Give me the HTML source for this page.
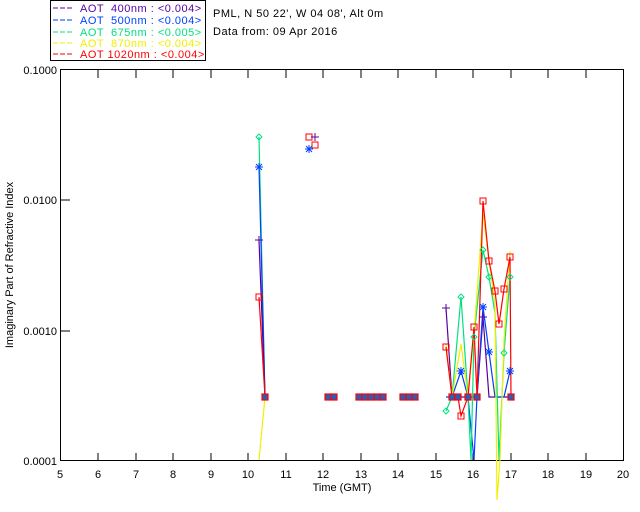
<!DOCTYPE html>
<html><head><style>
body{margin:0;background:#fff;width:640px;height:512px;overflow:hidden}
svg{display:block}
text{font-family:"Liberation Sans",sans-serif;font-size:11px}
</style></head><body>
<svg width="640" height="512" viewBox="0 0 640 512">
<rect x="50.5" y="0.5" width="155" height="60" fill="none" stroke="#000"/>
<g font-size="11" letter-spacing="0.5">
<line x1="53" y1="8" x2="74" y2="8" stroke="#5a00a0" stroke-dasharray="5,2"/><text x="80" y="12" fill="#5a00a0" xml:space="preserve">AOT  400nm : &lt;0.004&gt;</text>
<line x1="53" y1="20" x2="74" y2="20" stroke="#0040ff" stroke-dasharray="5,2"/><text x="80" y="24" fill="#0040ff" xml:space="preserve">AOT  500nm : &lt;0.004&gt;</text>
<line x1="53" y1="32" x2="74" y2="32" stroke="#00e080" stroke-dasharray="5,2"/><text x="80" y="36" fill="#00e080" xml:space="preserve">AOT  675nm : &lt;0.005&gt;</text>
<line x1="53" y1="43" x2="74" y2="43" stroke="#f0f000" stroke-dasharray="5,2"/><text x="80" y="47" fill="#f0f000" xml:space="preserve">AOT  870nm : &lt;0.004&gt;</text>
<line x1="53" y1="54" x2="74" y2="54" stroke="#ff0000" stroke-dasharray="5,2"/><text x="80" y="58" fill="#ff0000" xml:space="preserve">AOT 1020nm : &lt;0.004&gt;</text>
</g>
<g letter-spacing="0.5">
<text x="213" y="17">PML, N 50 22', W 04 08', Alt 0m</text>
<text x="213" y="35">Data from: 09 Apr 2016</text>
</g>
<rect x="60.5" y="69.5" width="563" height="391" fill="none" stroke="#000"/>
<g stroke="#000">
<path d="M98 70v8M136 70v8M173 70v8M211 70v8M248 70v8M286 70v8M323 70v8M361 70v8M398 70v8M436 70v8M473 70v8M511 70v8M548 70v8M586 70v8"/>
<path d="M98 461v-8M136 461v-8M173 461v-8M211 461v-8M248 461v-8M286 461v-8M323 461v-8M361 461v-8M398 461v-8M436 461v-8M473 461v-8M511 461v-8M548 461v-8M586 461v-8"/>
<path d="M60 200h10M60 331h10"/>
</g>
<g text-anchor="end" font-size="11"><text x="57" y="74">0.1000</text><text x="57" y="204">0.0100</text><text x="57" y="335">0.0010</text><text x="57" y="465">0.0001</text></g>
<g text-anchor="middle" font-size="11">
<text x="60" y="478">5</text><text x="98" y="478">6</text><text x="136" y="478">7</text><text x="173" y="478">8</text><text x="211" y="478">9</text><text x="248" y="478">10</text><text x="286" y="478">11</text><text x="323" y="478">12</text><text x="361" y="478">13</text><text x="398" y="478">14</text><text x="436" y="478">15</text><text x="473" y="478">16</text><text x="511" y="478">17</text><text x="548" y="478">18</text><text x="586" y="478">19</text><text x="623" y="478">20</text>
<text x="342" y="491">Time (GMT)</text>
<text transform="translate(13,265) rotate(-90)">Imaginary Part of Refractive Index</text>
</g>
<g fill="none" stroke-width="1.2">
<polyline stroke="#f0f000" points="259,460 265,397"/>
<polyline stroke="#00e080" points="259,137 265,397"/>
<polyline stroke="#0040ff" points="259,167 265,397"/>
<polyline stroke="#5a00a0" points="259,240 265,397"/>
<polyline stroke="#ff0000" points="259,297 265,397"/>
<polyline stroke="#5a00a0" points="446,308 452,397 458,397 468,397 474,397 477,397 483,317 489,397 495,397 499,397 504,397 510,397"/>
<polyline stroke="#0040ff" points="446,397 452,397 461,371 468,397 474,460 477,397 483,307 489,352 495,397 499,397 504,397 510,371"/>
<polyline stroke="#00e080" points="446,411 452,397 461,297 468,397 471,460 474,337 483,250 489,277 495,313 499,460 504,353 510,277"/>
<polyline stroke="#f0f000" points="446,344 452,397 461,344 468,397 474,333 483,213 489,260 495,305 497,500 500,460 504,340 510,251"/>
<polyline stroke="#ff0000" points="446,347 452,397 458,397 461,416 468,397 474,327 477,397 483,201 489,261 495,291 499,324 504,289 510,257 511,397"/>
</g>
<g fill="none" stroke-width="1">
<path stroke="#00e080" d="M259 134l3 3-3 3-3-3z"/>
<path stroke="#0040ff" d="M255 167h8M259 163v8M256 164l6 6M262 164l-6 6"/>
<path stroke="#5a00a0" d="M255 240h8M259 236v8"/>
<rect stroke="#ff0000" x="256" y="294" width="6" height="6"/>
<rect stroke="#ff0000" x="306" y="134" width="6" height="6"/>
<rect stroke="#ff0000" x="312" y="142" width="6" height="6"/>
<path stroke="#0040ff" d="M305 149h8M309 145v8M306 146l6 6M312 146l-6 6"/>
<path stroke="#5a00a0" d="M311 137h8M315 133v8"/>
<path stroke="#0040ff" d="M479 307h8M483 303v8M480 304l6 6M486 304l-6 6M457 371h8M461 367v8M458 368l6 6M464 368l-6 6M485 352h8M489 348v8M486 349l6 6M492 349l-6 6M506 371h8M510 367v8M507 368l6 6M513 368l-6 6"/>
<path stroke="#5a00a0" d="M442 308h8M446 304v8M479 317h8M483 313v8"/>
<path stroke="#00e080" d="M446 408l3 3-3 3-3-3zM461 294l3 3-3 3-3-3zM474 334l3 3-3 3-3-3zM483 247l3 3-3 3-3-3zM489 274l3 3-3 3-3-3zM504 350l3 3-3 3-3-3zM510 274l3 3-3 3-3-3z"/>
<g stroke="#ff0000">
<rect x="443" y="344" width="6" height="6"/><rect x="458" y="413" width="6" height="6"/><rect x="471" y="324" width="6" height="6"/><rect x="480" y="198" width="6" height="6"/><rect x="486" y="258" width="6" height="6"/><rect x="492" y="288" width="6" height="6"/><rect x="496" y="321" width="6" height="6"/><rect x="501" y="286" width="6" height="6"/><rect x="507" y="254" width="6" height="6"/>
</g>
</g>
<g stroke="#ff0000" fill="#2060c0" stroke-width="1.2">
<rect x="262" y="394" width="6" height="6"/>
<rect x="325" y="394" width="6" height="6"/><rect x="331" y="394" width="6" height="6"/>
<rect x="356" y="394" width="6" height="6"/><rect x="362" y="394" width="6" height="6"/><rect x="368" y="394" width="6" height="6"/><rect x="374" y="394" width="6" height="6"/><rect x="380" y="394" width="6" height="6"/>
<rect x="400" y="394" width="6" height="6"/><rect x="406" y="394" width="6" height="6"/><rect x="412" y="394" width="6" height="6"/>
<rect x="449" y="394" width="6" height="6"/><rect x="455" y="394" width="6" height="6"/><rect x="465" y="394" width="6" height="6"/><rect x="474" y="394" width="6" height="6"/><rect x="508" y="394" width="6" height="6"/>
</g>
</svg>
</body></html>
